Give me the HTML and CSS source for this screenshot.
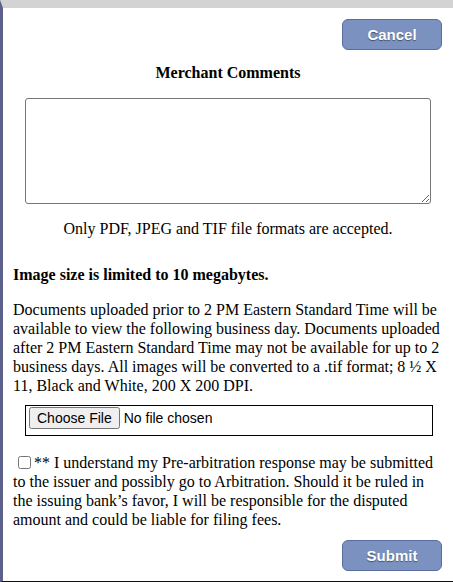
FILE: index.html
```html
<html>
<head>
<title>Merchant Comments</title>
<link rel="stylesheet" href="styles.css">
</head>
<body>
<div class="frame">
	<div class="actions">
		<button class="blue-button" type="button">Cancel</button>
	</div>
	<h3 class="title">Merchant Comments</h3>
	<textarea class="comments"></textarea>
	<p class="formats">Only PDF, JPEG and TIF file formats are accepted.</p>
	<p class="limit">Image size is limited to 10 megabytes.</p>
	<p class="notice">Documents uploaded prior to 2 PM Eastern Standard Time will be available to view the following business day. Documents uploaded after 2 PM Eastern Standard Time may not be available for up to 2 business days. All images will be converted to a .tif format; 8 &frac12; X 11, Black and White, 200 X 200 DPI.</p>
	<div class="file-box">
		<input type="file" class="file-input">
	</div>
	<p class="agree"><input type="checkbox" class="agree-box">** I understand my Pre-arbitration response may be submitted to the issuer and possibly go to Arbitration. Should it be ruled in the issuing bank&rsquo;s favor, I will be responsible for the disputed amount and could be liable for filing fees.</p>
	<div class="actions bottom">
		<button class="blue-button" type="button">Submit</button>
	</div>
</div>
</body>
</html>
```
FILE: styles.css
```css
html, body {
	margin:0;
	background:#fff;
}
.frame {
	box-sizing:border-box;
	height:582px;
	border-top:8px solid #d3d3d3;
	border-left:3px solid #5c618c;
	border-bottom:1px solid #111;
	padding:0 10px 0 10px;
	font-family:"Liberation Serif", serif;
	font-size:16px;
	line-height:19px;
	color:#000;
}
.actions {
	display:flex;
	justify-content:flex-end;
	padding-top:11px;
	padding-right:1px;
}
.actions.bottom {
	padding-top:0;
	margin-top:11px;
}
.blue-button {
	width:100px;
	height:31px;
	background-color:#7b92c0;
	border:1px solid #5b6d9e;
	border-radius:6px;
	color:#fff;
	font-family:"Liberation Sans", Arial, sans-serif;
	font-weight:bold;
	font-size:15px;
	text-shadow:0 1px 1px rgba(0,0,0,.45);
	cursor:pointer;
}
.title {
	margin:14px 0 0 0;
	font-size:16px;
	line-height:17px;
	text-align:center;
}
.comments {
	display:block;
	box-sizing:border-box;
	width:406px;
	height:106px;
	margin:17px 0 0 12px;
	border:1px solid #767676;
	border-radius:3px;
}
.formats {
	margin:15px 0 0 0;
	text-align:center;
}
.limit {
	margin:27px 0 0 0;
	font-weight:bold;
}
.notice {
	margin:16px 0 0 0;
}
.file-box {
	box-sizing:border-box;
	width:408px;
	height:31px;
	margin:10px 0 0 12px;
	padding:1px 3px;
	border:1px solid #000;
}
.file-input {
	font-family:"Liberation Sans", Arial, sans-serif;
	font-size:14px;
}
.agree {
	margin:17px 0 0 0;
}
.agree-box {
	width:13px;
	height:13px;
	margin:0 3px 0 5px;
	vertical-align:-1px;
}
```
